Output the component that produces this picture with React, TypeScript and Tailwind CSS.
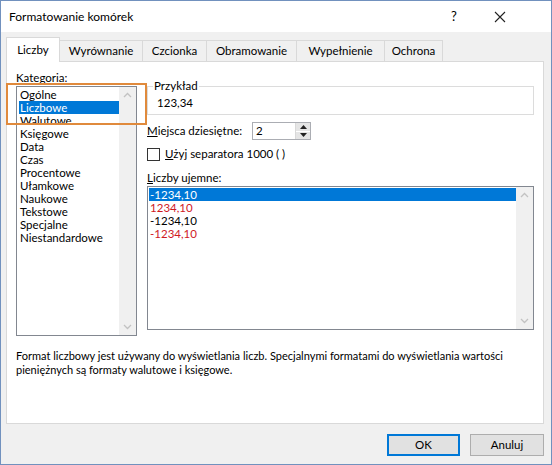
import React from "react";

const tabs = [
  { label: "Liczby", w: "w-[54px]" },
  { label: "Wyrównanie", w: "w-[83px]" },
  { label: "Czcionka", w: "w-[64px]" },
  { label: "Obramowanie", w: "w-[90px]" },
  { label: "Wypełnienie", w: "w-[88px]" },
  { label: "Ochrona", w: "w-[58px]" },
];

const categories = [
  "Ogólne",
  "Liczbowe",
  "Walutowe",
  "Księgowe",
  "Data",
  "Czas",
  "Procentowe",
  "Ułamkowe",
  "Naukowe",
  "Tekstowe",
  "Specjalne",
  "Niestandardowe",
];

const negatives = [
  { text: "-1234,10", red: false },
  { text: "1234,10", red: true },
  { text: "-1234,10", red: false },
  { text: "-1234,10", red: true },
];

function Chevron({ up }: { up?: boolean }) {
  return (
    <svg width="9" height="6" viewBox="0 0 9 6" className="text-[#c2c2c2]">
      <path
        d={up ? "M1 5 L4.5 1.5 L8 5" : "M1 1 L4.5 4.5 L8 1"}
        fill="none"
        stroke="currentColor"
        strokeWidth="1.3"
      />
    </svg>
  );
}

function ScrollBar() {
  return (
    <div className="w-[17px] bg-[#f0f0f0] flex flex-col justify-between items-center py-[5px]">
      <Chevron up />
      <Chevron />
    </div>
  );
}

export default function App() {
  return (
    <div className="relative w-[552px] h-[465px] font-['Lato',sans-serif] text-[11.5px] text-black">
      <div className="w-full h-full flex flex-col border border-[#7191be] bg-[#f0f0f0]">
        {/* title bar */}
        <div className="h-[31px] bg-white flex items-center pl-[8px] shrink-0">
          <span className="text-[12px]">Formatowanie komórek</span>
          <span className="ml-auto text-[13px] w-[10px] mr-[33px]">?</span>
          <svg width="12" height="12" viewBox="0 0 12 12" className="mr-[45px]">
            <path d="M1 1 L11 11 M11 1 L1 11" stroke="#222" strokeWidth="1.1" />
          </svg>
        </div>

        {/* tabs */}
        <div className="flex items-end h-[29px] pl-[5px] pt-[5px] shrink-0">
          {tabs.map((t, i) =>
            i === 0 ? (
              <div
                key={t.label}
                className={`${t.w} h-[25px] bg-white border border-b-0 border-[#d9d9d9] flex items-center justify-center relative top-[1px] z-10`}
              >
                {t.label}
              </div>
            ) : (
              <div
                key={t.label}
                className={`${t.w} h-[21px] border border-l-0 border-b-0 border-[#d9d9d9] flex items-center justify-center`}
              >
                {t.label}
              </div>
            )
          )}
        </div>

        {/* panel */}
        <div className="ml-[5px] w-[538px] h-[363px] bg-white border border-[#d9d9d9] flex flex-col px-[9px] pt-[7px] shrink-0">
          <div className="flex gap-[10px]">
            {/* left column */}
            <div className="w-[122px] flex flex-col">
              <div className="h-[17px] leading-[17px]">
                <span className="underline">K</span>ategoria:
              </div>
              <div className="h-[250px] border border-[#828790] flex">
                <div className="flex-1 flex flex-col pt-[1px] pl-[2px]">
                  {categories.map((c, i) => (
                    <div
                      key={c}
                      className={`h-[13px] leading-[13px] pl-[1px] ${
                        i === 1 ? "bg-[#0078d7] text-white" : ""
                      }`}
                    >
                      {c}
                    </div>
                  ))}
                </div>
                <ScrollBar />
              </div>
            </div>

            {/* right column */}
            <div className="w-[390px] flex flex-col">
              {/* group box */}
              <div className="relative mt-[17px] h-[29px] border border-[#dcdcdc] pl-[9px] pt-[8px]">
                <span className="absolute -top-[9px] left-[5px] bg-white px-[1px] leading-[16px]">
                  Przykład
                </span>
                <div className="leading-[16px]">123,34</div>
              </div>

              <div className="flex items-center h-[18px] mt-[7px]">
                <span className="w-[105px]">
                  <span className="underline">M</span>iejsca dziesiętne:
                </span>
                <div className="w-[59px] h-[18px] border border-[#abadb3] flex">
                  <span className="flex-1 pl-[3px] leading-[16px]">2</span>
                  <div className="w-[15px] flex flex-col border-l border-[#d9d9d9]">
                    <div className="flex-1 bg-[#e5e5e5] border-b border-white flex items-center justify-center">
                      <svg width="7" height="4" viewBox="0 0 7 4">
                        <path d="M0 4 L3.5 0 L7 4 Z" fill="#222" />
                      </svg>
                    </div>
                    <div className="flex-1 bg-[#e5e5e5] flex items-center justify-center">
                      <svg width="7" height="4" viewBox="0 0 7 4">
                        <path d="M0 0 L3.5 4 L7 0 Z" fill="#222" />
                      </svg>
                    </div>
                  </div>
                </div>
              </div>

              <div className="flex items-center h-[14px] mt-[7px] gap-[5px]">
                <div className="w-[13px] h-[13px] border border-[#333] bg-white" />
                <span>
                  <span className="underline">U</span>żyj separatora 1000 ( )
                </span>
              </div>

              <div className="h-[17px] leading-[17px] mt-[8px]">
                <span className="underline">L</span>iczby ujemne:
              </div>
              <div className="h-[144px] border border-[#828790] flex">
                <div className="flex-1 flex flex-col pt-[1px] pl-[1px]">
                  {negatives.map((n, i) => (
                    <div
                      key={i}
                      className={`h-[13px] leading-[13px] pl-[1px] ${
                        i === 0
                          ? "bg-[#0078d7] text-white"
                          : n.red
                          ? "text-[#d0191f]"
                          : ""
                      }`}
                    >
                      {n.text}
                    </div>
                  ))}
                </div>
                <ScrollBar />
              </div>
            </div>
          </div>

          <p className="mt-[13px] leading-[14px] text-[11px] whitespace-nowrap">
            Format liczbowy jest używany do wyświetlania liczb. Specjalnymi formatami do wyświetlania wartości
            <br />
            pieniężnych są formaty walutowe i księgowe.
          </p>
        </div>

        {/* buttons */}
        <div className="flex justify-end gap-[10px] pr-[7px] pt-[10px]">
          <button className="w-[73px] h-[22px] bg-[#e1e1e1] border-2 border-[#0078d7]">OK</button>
          <button className="w-[74px] h-[22px] bg-[#e1e1e1] border border-[#adadad]">Anuluj</button>
        </div>
      </div>

      {/* annotation */}
      <div className="absolute left-[6px] top-[83px] w-[141px] h-[42px] border-2 border-[#e08a3c]" />
    </div>
  );
}
